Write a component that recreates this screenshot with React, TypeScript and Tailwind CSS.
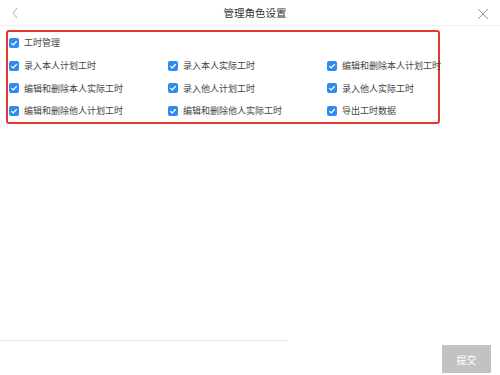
const rows: string[][] = [
  ['录入本人计划工时', '录入本人实际工时', '编辑和删除本人计划工时'],
  ['编辑和删除本人实际工时', '录入他人计划工时', '录入他人实际工时'],
  ['编辑和删除他人计划工时', '编辑和删除他人实际工时', '导出工时数据'],
];

function Check() {
  return (
    <span className="w-[10px] h-[10px] rounded-[2px] bg-[#2d8cf0] flex items-center justify-center shrink-0">
      <svg width="8" height="8" viewBox="0 0 8 8">
        <path d="M1.3 4.1 L3.2 5.9 L6.7 2.2" fill="none" stroke="#fff" strokeWidth="1.3" />
      </svg>
    </span>
  );
}

function Item({ label }: { label: string }) {
  return (
    <div className="flex items-center gap-[5px] whitespace-nowrap h-[14px]">
      <Check />
      <span>{label}</span>
    </div>
  );
}

export default function App() {
  return (
    <div
      className="w-[500px] h-[375px] bg-white flex flex-col text-[#333] overflow-hidden"
      style={{ fontFamily: '"Noto Sans CJK SC", "Noto Sans", sans-serif' }}
    >
      {/* Header */}
      <div className="h-[26px] flex items-center justify-between px-[10px] border-b border-[#f0f0f0]">
        <svg width="10" height="14" viewBox="0 0 10 14">
          <path d="M7 2 L3 7 L7 12" fill="none" stroke="#aaa" strokeWidth="1" />
        </svg>
        <span className="text-[10.5px] text-[#333] pl-[14px]">管理角色设置</span>
        <svg width="14" height="14" viewBox="0 0 14 14" className="mt-[2px]">
          <path d="M2 2 L12 12 M12 2 L2 12" fill="none" stroke="#999" strokeWidth="1" />
        </svg>
      </div>

      {/* Permissions */}
      <div className="mt-[4px] ml-[6px] w-[434px] h-[94px] border-2 border-[#e0392f] rounded-[3px] pl-[1px] pt-[4px] text-[9px] text-[#444] flex flex-col gap-[8.7px]">
        <Item label="工时管理" />
        {rows.map((r) => (
          <div key={r[0]} className="grid grid-cols-[159px_159px_1fr]">
            {r.map((l) => (
              <Item key={l} label={l} />
            ))}
          </div>
        ))}
      </div>

      <div className="flex-1" />

      {/* Footer */}
      <div className="w-[288px] border-t border-[#e8e8e8]" />
      <div className="flex justify-end pr-[9px] pt-[4px] pb-[2px]">
        <button className="w-[49px] h-[28px] bg-[#c2c2c2] text-white text-[10px] flex items-center justify-center">
          提交
        </button>
      </div>
    </div>
  );
}
